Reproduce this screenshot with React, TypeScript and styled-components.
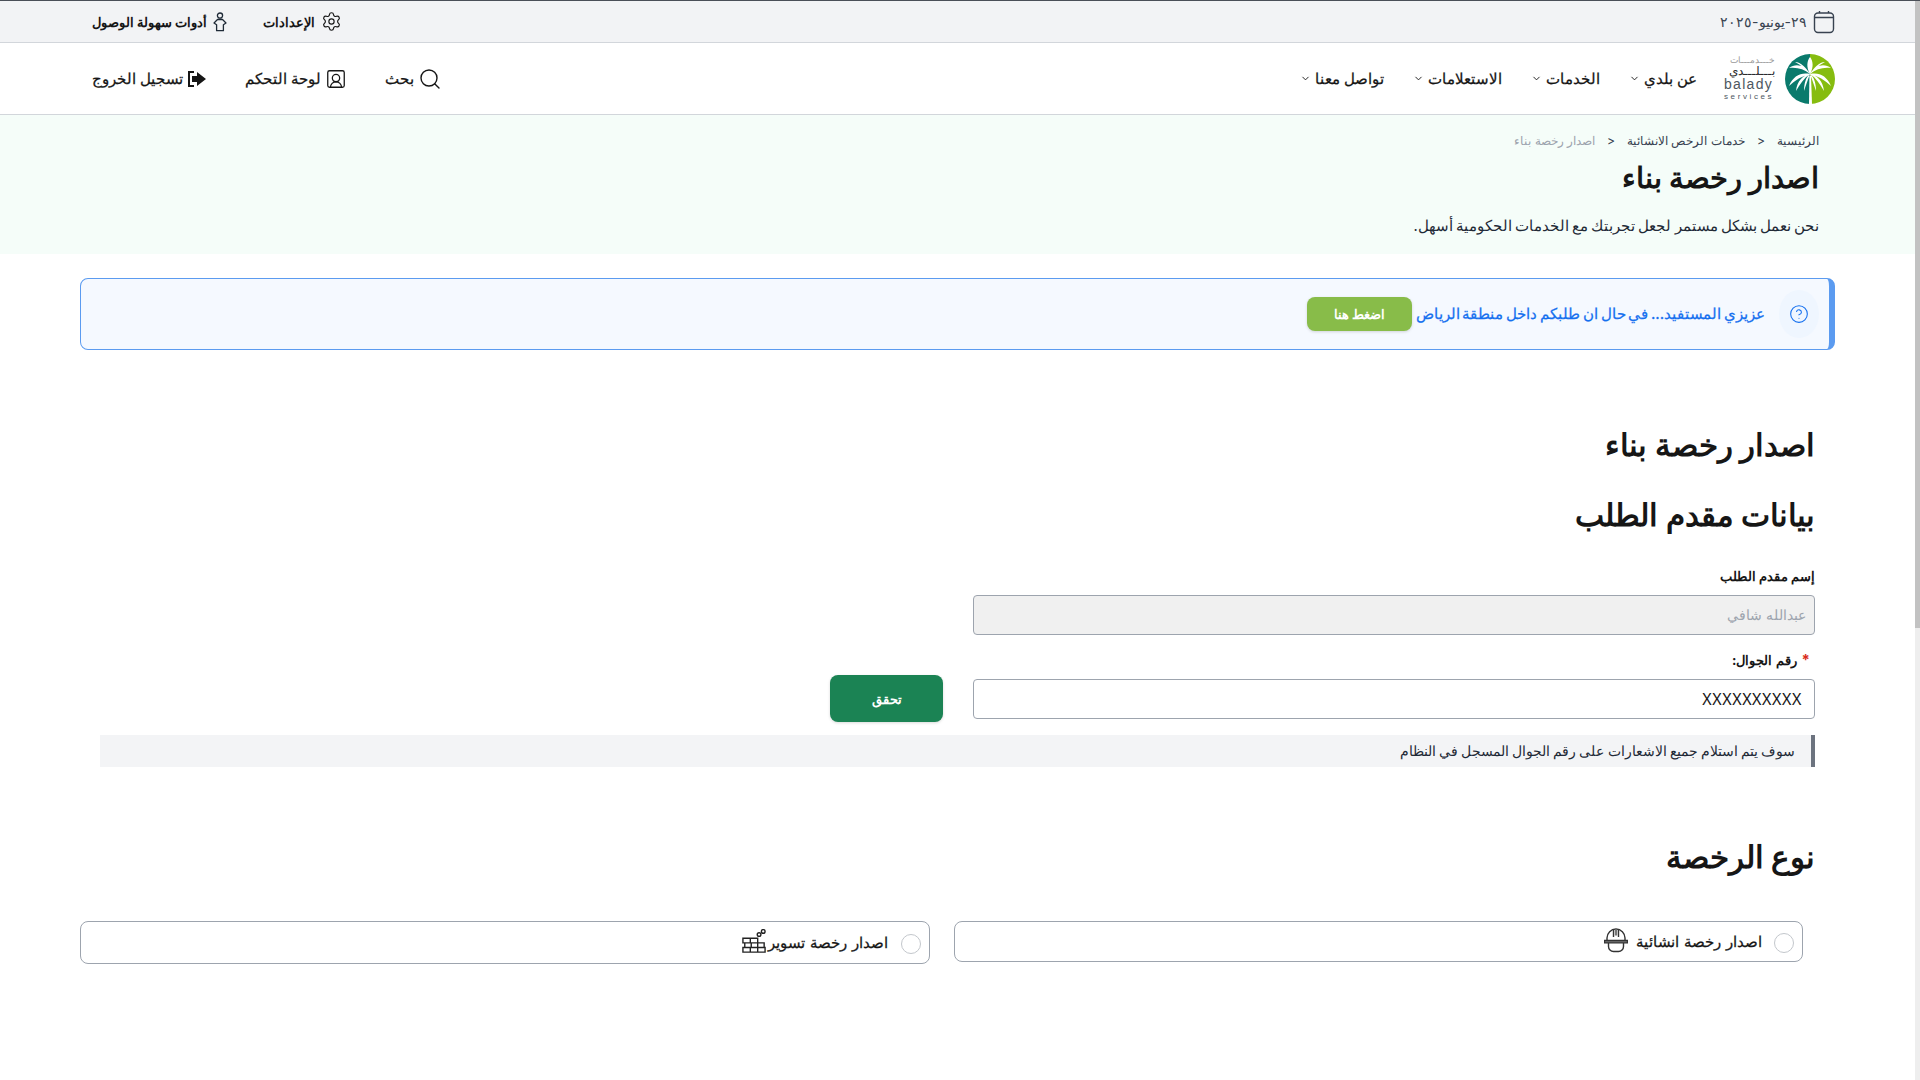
import React from 'react';
import styled, { createGlobalStyle } from 'styled-components';
import { ChevronDown, Search, SquareUserRound, Settings, HelpCircle } from 'lucide-react';

const GlobalStyle = createGlobalStyle`
  html, body { overflow: hidden; }
  body {
    margin: 0;
    background: #fff;
    color: #161616;
    font-family: Inter, sans-serif;
  }
`;

const Shell = styled.div`
  display: flex;
  height: 100vh;
  box-sizing: border-box;
  border-top: 1px solid #4a4f57;
`;

const ScrollRail = styled.div`
  width: 5px;
  background: #eeeeee;
`;

const ScrollThumb = styled.div`
  height: 627px;
  background: #c2c2c2;
`;

const Page = styled.div`
  flex: 1;
  min-width: 0;
  direction: rtl;
`;

const TopBar = styled.div`
  height: 41px;
  background: #f2f3f5;
  border-bottom: 1px solid #d2d6db;
  display: flex;
  align-items: center;
  justify-content: space-between;
  padding: 0 80px 0 92px;
`;

const TopGroup = styled.div`
  display: flex;
  align-items: center;
  gap: 36px;
`;

const TopItem = styled.span<{ $muted?: boolean }>`
  display: flex;
  align-items: center;
  gap: 6px;
  font-size: ${(p) => (p.$muted ? 14 : 13.4)}px;
  font-weight: ${(p) => (p.$muted ? 400 : 700)};
  color: ${(p) => (p.$muted ? '#384250' : '#161616')};
`;

const NavBar = styled.div`
  height: 71px;
  border-bottom: 1px solid #d2d6db;
  display: flex;
  align-items: center;
  justify-content: space-between;
  padding: 0 80px 0 92px;
`;

const NavGroup = styled.nav<{ $gap: number }>`
  display: flex;
  align-items: center;
  gap: ${(p) => p.$gap}px;
`;

const Logo = styled.div`
  display: flex;
  align-items: center;
  gap: 10px;
  margin-left: -2px;
`;

const NavLink = styled.a`
  display: flex;
  align-items: center;
  gap: 4px;
  font-size: 15px;
  font-weight: 500;
  -webkit-text-stroke: 0.25px currentColor;
  color: #161616;
`;

const Hero = styled.section`
  height: 139px;
  box-sizing: border-box;
  background: #f5fdf9;
  padding: 18px 96px 0;
`;

const Crumbs = styled.div`
  display: flex;
  align-items: center;
  gap: 12px;
  font-size: 12.2px;
  color: #384250;
`;

const CrumbLast = styled.span`
  color: #9da4ae;
`;

const HeroTitle = styled.h1`
  margin: 10px 0 0;
  font-size: 29px;
  line-height: 40px;
  font-weight: 700;
`;

const HeroText = styled.p`
  margin: 18px 0 0;
  font-size: 14.7px;
  word-spacing: -1px;
  line-height: 20px;
  color: #1f2a37;
`;

const Alert = styled.div`
  margin: 24px 80px 0;
  height: 72px;
  box-sizing: border-box;
  border: 1px solid #5b9bf0;
  border-right: 6px solid #5b9bf0;
  border-radius: 8px;
  background: #f5f9ff;
  display: flex;
  align-items: center;
  padding-right: 10px;
  color: #1570ef;
  font-size: 14.6px;
  word-spacing: -1.1px;
  font-weight: 500;
  -webkit-text-stroke: 0.25px currentColor;
`;

const AlertIcon = styled.span`
  width: 40px;
  height: 48px;
  border-radius: 50%;
  background: #eff6ff;
  display: flex;
  align-items: center;
  justify-content: center;
  margin-left: 14px;
  -webkit-text-stroke: 0;
`;

const GreenButton = styled.button`
  width: 105px;
  height: 34px;
  margin-right: 4px;
  border: 0;
  border-radius: 8px;
  background: #88bc49;
  color: #fff;
  font: 700 13px Inter, sans-serif;
  -webkit-text-stroke: 0;
  box-shadow: 0 1px 3px rgba(0, 0, 0, 0.15);
`;

const Main = styled.main`
  padding: 71px 100px 0 100px;
`;

const PageTitle = styled.h2`
  margin: 0;
  font-size: 31px;
  line-height: 48px;
  font-weight: 700;
`;

const SectionTitle = styled.h2<{ $top: number }>`
  margin: ${(p) => p.$top}px 0 0;
  font-size: 31.4px;
  line-height: 48px;
  font-weight: 700;
`;

const FieldLabel = styled.label`
  display: block;
  font-size: 13.3px;
  font-weight: 700;
  line-height: 20px;
`;

const Star = styled.span`
  color: #d92d20;
  font-size: 15px;
  margin: 0 5px 0 5px;
`;

const FieldRow = styled.div`
  display: flex;
  align-items: flex-start;
  gap: 30px;
`;

const Field = styled.div<{ $top: number }>`
  margin-top: ${(p) => p.$top}px;
  width: 842px;
`;

const TextBox = styled.div<{ $disabled?: boolean }>`
  height: 40px;
  box-sizing: border-box;
  margin-top: 9px;
  padding: 0 ${(p) => (p.$disabled ? 8 : 12)}px 0 12px;
  display: flex;
  align-items: center;
  border: 1px solid #9da4ae;
  border-radius: 4px;
  font-size: ${(p) => (p.$disabled ? 13.5 : 16)}px;
  background: ${(p) => (p.$disabled ? '#f0f0f0' : '#fff')};
  color: ${(p) => (p.$disabled ? '#9da4ae' : '#161616')};
`;

const Masked = styled.span`
  font-family: 'Noto Sans', sans-serif;
  letter-spacing: 0.6px;
`;

const VerifyButton = styled.button`
  width: 113px;
  height: 47px;
  margin-top: 40px;
  border: 0;
  border-radius: 8px;
  background: #1b8354;
  color: #fff;
  font: 700 13px Inter, sans-serif;
  box-shadow: 0 1px 3px rgba(0, 0, 0, 0.15);
`;

const Note = styled.div`
  margin-top: 13px;
  height: 32px;
  padding-right: 16px;
  display: flex;
  align-items: center;
  border-right: 4px solid #6c737f;
  background: #f3f4f6;
  font-size: 13.6px;
  word-spacing: -0.7px;
  color: #1f2a37;
`;

const TypeRow = styled.div`
  display: flex;
  align-items: flex-start;
  gap: 24px;
  margin: 40px 0 0 -20px;
  padding-right: 12px;
`;

const TypeCard = styled.label<{ $height: number }>`
  flex: 1;
  height: ${(p) => p.$height}px;
  box-sizing: border-box;
  display: flex;
  align-items: center;
  gap: 8px;
  padding-right: 8px;
  border: 1px solid #9da4ae;
  border-radius: 8px;
  font-size: 15.4px;
  word-spacing: 1px;
  font-weight: 500;
  -webkit-text-stroke: 0.25px currentColor;
  color: #161616;
`;

const Radio = styled.span`
  width: 20px;
  height: 20px;
  box-sizing: border-box;
  border-radius: 50%;
  border: 1px solid #c3c7cc;
  margin: 3px 0 0 4px;
`;

const IconSlot = styled.span<{ $pull?: number }>`
  display: flex;
  margin-right: ${(p) => p.$pull ?? 0}px;
  margin-top: -3px;
`;

const LogoText = styled.div`
  display: flex;
  flex-direction: column;
  align-items: stretch;
  width: 51px;
  color: #4d5761;
`;

const LogoAr = styled.span<{ $bold?: boolean }>`
  font-size: ${(p) => (p.$bold ? 12 : 9)}px;
  line-height: ${(p) => (p.$bold ? 13 : 9)}px;
  white-space: nowrap;
  color: ${(p) => (p.$bold ? '#2b2b2b' : '#9a9a9a')};
`;

const LogoEn = styled.span<{ $small?: boolean }>`
  direction: ltr;
  font-family: 'Liberation Sans', sans-serif;
  font-size: ${(p) => (p.$small ? 8 : 14)}px;
  letter-spacing: ${(p) => (p.$small ? 2.6 : 1.3)}px;
  line-height: ${(p) => (p.$small ? 10 : 15)}px;
  white-space: nowrap;
`;

function PalmLogo() {
  return (
    <svg width="50" height="50" viewBox="0 0 50 50">
      <path d="M25 0a25 25 0 0 0 0 50z" fill="#0a7a6c" />
      <path d="M25 0a25 25 0 0 1 0 50z" fill="#86bc0f" />
      <path d="M24 50 24.4 22h1.6l1 28z" fill="#fff" />
      <path
        d="M25 20C20 11 11 9 4 14c8-1 15 1 21 6zM25 20c5-9 14-11 21-6-8-1-15 1-21 6zM25 20c-4-7-3-13 0-17 3 4 4 10 0 17zM25 20c-4-6-9-12-15-12 6 3 11 7 15 12zM25 20c4-6 9-12 15-12-6 3-11 7-15 12zM25 20c-9-2-17 2-21 12 6-6 13-10 21-12zM25 20c9-2 17 2 21 12-6-6-13-10-21-12zM25 20c-7 1-13 7-14 17 4-7 8-13 14-17zM25 20c7 1 13 7 14 17-4-7-8-13-14-17zM25 20c-4 3-6 9-6 17 2-6 4-12 6-17zM25 20c4 3 6 9 6 17-2-6-4-12-6-17z"
        fill="#fff"
      />
    </svg>
  );
}

function CalendarIcon() {
  return (
    <svg width="22" height="24" viewBox="0 0 22 24" fill="none" stroke="#384250" strokeWidth="1.4">
      <rect x="1.5" y="3" width="19" height="19.5" rx="3.5" />
      <path d="M1.5 7.5h19M6.5 1v2M15.5 1v2" />
    </svg>
  );
}

function AccessIcon() {
  return (
    <svg width="14" height="20" viewBox="0 0 14 20" fill="none" stroke="#1f2a37" strokeWidth="1.3">
      <circle cx="7" cy="3.6" r="2.6" />
      <path d="M4.5 7.5h5L13 11l-2.6 1.7v6H3.6v-6L1 11z" strokeLinejoin="round" />
    </svg>
  );
}

function HelmetIcon() {
  return (
    <svg width="24" height="25" viewBox="0 0 24 25" fill="none" stroke="#333" strokeWidth="1.4">
      <path d="M3 12V10a9 9 0 0 1 18 0v2" />
      <path d="M9.5 2v7M14.5 2v7" />
      <path d="M12 1.5v6" strokeWidth="2.4" stroke="#777" />
      <path d="M.5 12.5h23v2.4H.5z" fill="#777" />
      <path d="M4.5 15v3.5a5 5 0 0 0 5 5h5a5 5 0 0 0 5-5V15" />
    </svg>
  );
}

function WallIcon() {
  return (
    <svg width="24" height="25" viewBox="0 0 26 27" fill="none" stroke="#222" strokeWidth="1.5">
      <path d="M1 10h8v5H1zM9 10h8v5H9zM3 15h7v5H3zM10 15h7v5h-7zM17 15h7v5h-7zM1 20h8v5H1zM9 20h8v5H9zM17 20h8v5h-8z" />
      <circle cx="18.5" cy="6" r="2" />
      <circle cx="23" cy="2.6" r="2" />
    </svg>
  );
}

function LogoutIcon() {
  return (
    <svg width="20" height="18" viewBox="0 0 20 18" fill="#161616">
      <path d="M10 2 19 9l-9 7v-4H5V6h5z" />
      <path d="M7 2H2v14h5" fill="none" stroke="#161616" strokeWidth="2" />
    </svg>
  );
}

const navItems = ['عن بلدي', 'الخدمات', 'الاستعلامات', 'تواصل معنا'];

export default function App() {
  return (
    <Shell>
      <GlobalStyle />
      <Page>
        <TopBar>
          <TopItem $muted>
            <CalendarIcon />
            ٢٩-يونيو-٢٠٢٥
          </TopItem>
          <TopGroup>
            <TopItem>
              <Settings size={21} strokeWidth={1.3} />
              الإعدادات
            </TopItem>
            <TopItem>
              <AccessIcon />
              أدوات سهولة الوصول
            </TopItem>
          </TopGroup>
        </TopBar>
        <NavBar>
          <NavGroup $gap={29}>
            <Logo>
              <PalmLogo />
              <LogoText>
                <LogoAr>خـــدمـــات</LogoAr>
                <LogoAr $bold>بـــلـــدي</LogoAr>
                <LogoEn>balady</LogoEn>
                <LogoEn $small>services</LogoEn>
              </LogoText>
            </Logo>
            {navItems.map((item) => (
              <NavLink key={item}>
                {item}
                <ChevronDown size={11} />
              </NavLink>
            ))}
          </NavGroup>
          <NavGroup $gap={38}>
            <NavLink>
              <Search size={24} strokeWidth={1.4} />
              بحث
            </NavLink>
            <NavLink>
              <SquareUserRound size={22} strokeWidth={1.4} />
              لوحة التحكم
            </NavLink>
            <NavLink>
              <LogoutIcon />
              تسجيل الخروج
            </NavLink>
          </NavGroup>
        </NavBar>
        <Hero>
          <Crumbs>
            <span>الرئيسية</span>
            <span>&lt;</span>
            <span>خدمات الرخص الانشائية</span>
            <span>&lt;</span>
            <CrumbLast>اصدار رخصة بناء</CrumbLast>
          </Crumbs>
          <HeroTitle>اصدار رخصة بناء</HeroTitle>
          <HeroText>نحن نعمل بشكل مستمر لجعل تجربتك مع الخدمات الحكومية أسهل.</HeroText>
        </Hero>
        <Alert>
          <AlertIcon>
            <HelpCircle size={20} strokeWidth={1.3} />
          </AlertIcon>
          عزيزي المستفيد... في حال ان طلبكم داخل منطقة الرياض
          <GreenButton>اضغط هنا</GreenButton>
        </Alert>
        <Main>
          <PageTitle>اصدار رخصة بناء</PageTitle>
          <SectionTitle $top={22}>بيانات مقدم الطلب</SectionTitle>
          <Field $top={27}>
            <FieldLabel>إسم مقدم الطلب</FieldLabel>
            <TextBox $disabled>عبدالله شافي</TextBox>
          </Field>
          <FieldRow>
            <Field $top={15}>
              <FieldLabel>
                <Star>*</Star>
                رقم الجوال:
              </FieldLabel>
              <TextBox>
                <Masked>XXXXXXXXXX</Masked>
              </TextBox>
            </Field>
            <VerifyButton>تحقق</VerifyButton>
          </FieldRow>
          <Note>سوف يتم استلام جميع الاشعارات على رقم الجوال المسجل في النظام</Note>
          <SectionTitle $top={66}>نوع الرخصة</SectionTitle>
          <TypeRow>
            <TypeCard $height={41}>
              <Radio />
              اصدار رخصة انشائية
              <IconSlot>
                <HelmetIcon />
              </IconSlot>
            </TypeCard>
            <TypeCard $height={43}>
              <Radio />
              اصدار رخصة تسوير
              <IconSlot $pull={-6}>
                <WallIcon />
              </IconSlot>
            </TypeCard>
          </TypeRow>
        </Main>
      </Page>
      <ScrollRail>
        <ScrollThumb />
      </ScrollRail>
    </Shell>
  );
}
